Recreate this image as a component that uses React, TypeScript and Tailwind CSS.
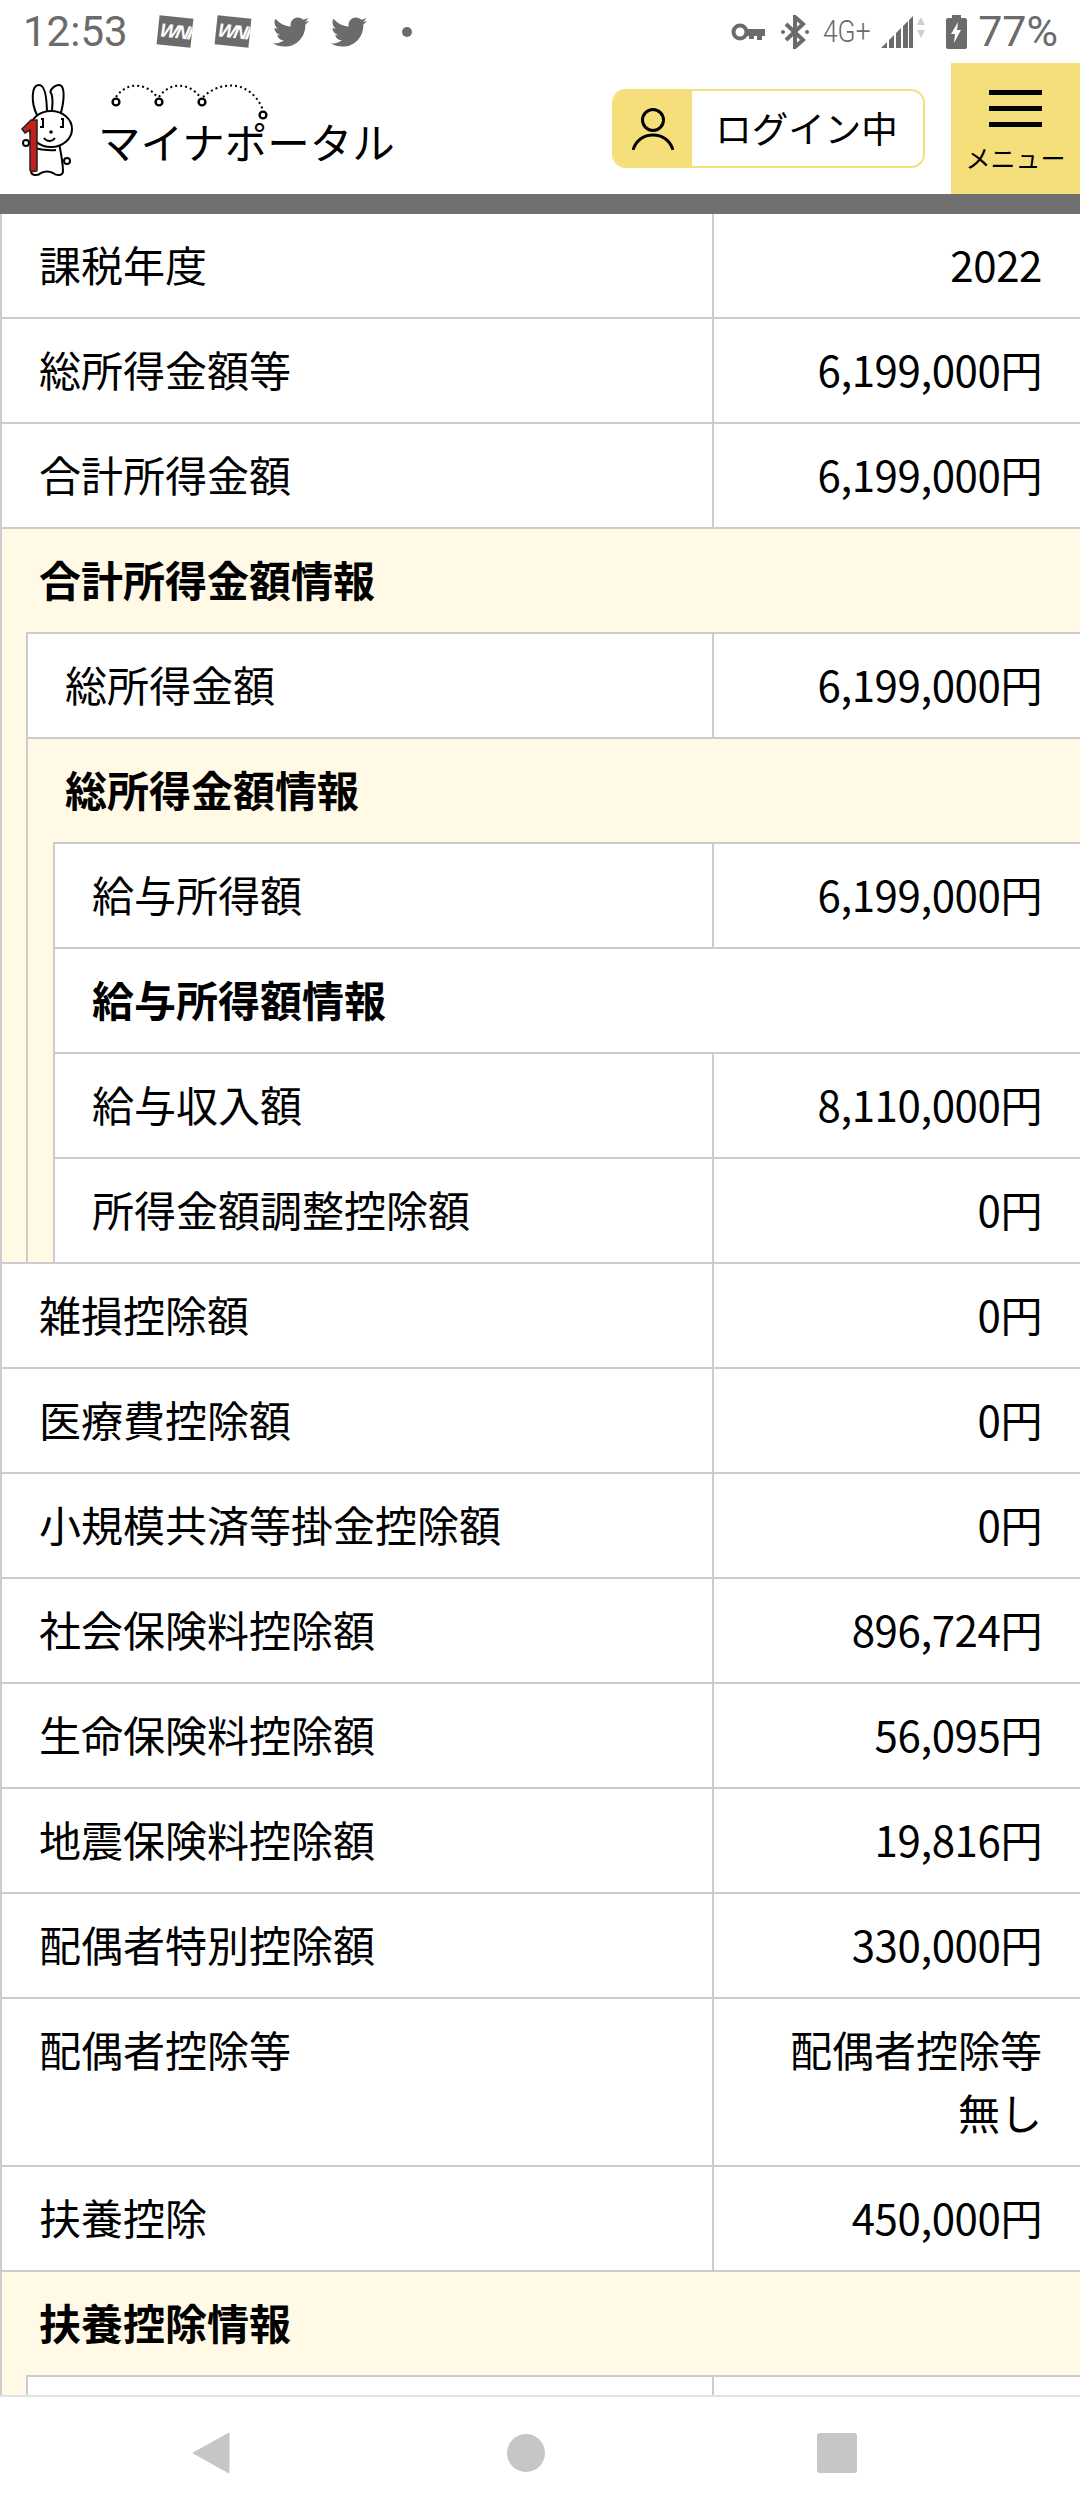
import { FaTwitter } from "react-icons/fa";

const font = "font-['Noto_Sans_CJK_JP','Noto_Sans',sans-serif]";

function WniIcon() {
    return (
        <div className="w-[34px] h-[29px] bg-[#6b6b6b] rotate-[6deg] flex items-center justify-center overflow-hidden">
            <span className="font-['Liberation_Sans',sans-serif] text-white font-bold italic text-[19px] leading-none tracking-[-2px] -skew-x-6">WNI</span>
        </div>
    );
}

function StatusBar() {
    return (
        <div className="h-[63px] flex items-center pl-[23px] pr-[22px] text-[#6b6b6b] font-['Roboto',sans-serif]">
            <span className="text-[42px] leading-none w-[135px]">12:53</span>
            <div className="flex items-center">
                <WniIcon />
                <div className="w-[24px]" />
                <WniIcon />
                <FaTwitter className="ml-[23px] w-[36px] h-[36px]" />
                <FaTwitter className="ml-[22px] w-[36px] h-[36px]" />
                <div className="ml-[35px] w-[10px] h-[10px] rounded-full bg-[#6b6b6b]" />
            </div>
            <div className="flex-1" />
            <svg width="34" height="20" viewBox="0 0 34 20" className="mr-[16px]">
                <circle cx="9" cy="10" r="6.5" fill="none" stroke="#6b6b6b" strokeWidth="4" />
                <path d="M15 7h19v7h-3v4h-5v-4h-3v3h-5v-3h-3z" fill="#6b6b6b" />
            </svg>
            <svg width="28" height="34" viewBox="0 0 28 34" className="mr-[14px]" fill="none" stroke="#6b6b6b" strokeWidth="4">
                <path d="M5 9l17 16-8 7V2l8 7-17 16" />
                <circle cx="2" cy="17" r="2" fill="#6b6b6b" stroke="none" />
                <circle cx="26" cy="17" r="2" fill="#6b6b6b" stroke="none" />
            </svg>
            <span className="text-[31px] leading-none font-['Roboto',sans-serif] font-light scale-x-[0.85] origin-left w-[52px] mr-[6px]">4G+</span>
            <svg width="44" height="34" viewBox="0 0 44 34" className="mr-[21px]">
                <path d="M0 33L6 27V33Z M8 25L13 20V33H8Z M15 18L20 13V33H15Z M22 11L27 6V33H22Z M28 5L32 1V33H28Z" fill="#6b6b6b" />
                <path d="M36 10l4-8 4 8zM36 15l4 8 4-8z" fill="#cfcfcf" />
            </svg>
            <svg width="21" height="34" viewBox="0 0 21 34" className="mr-[11px]">
                <path d="M6 0h9v3h4a2 2 0 0 1 2 2v27a2 2 0 0 1-2 2H2a2 2 0 0 1-2-2V5a2 2 0 0 1 2-2h4z" fill="#6b6b6b" />
                <path d="M12 7L5 19h4l-1 9 7-13h-4z" fill="#fff" />
            </svg>
            <span className="text-[43px] leading-none">77%</span>
        </div>
    );
}

function Rabbit() {
    return (
        <svg width="58" height="94" viewBox="0 0 58 94" className="shrink-0">
            <g fill="#fff" stroke="#000" strokeWidth="2">
                <path d="M19 32C13 20 13 2 21 2c7 0 8 16 8 30" />
                <path d="M33 32c2-8 2-18 0-22-2-2 3-8 8-8 7 0 5 18 1 31" />
                <path d="M17 60c-2 10-4 22-4 28 0 5 7 5 10 2 4-2 8-2 12 0 4 3 10 3 10-2 0-8-2-18-4-28z" />
                <circle cx="49" cy="78" r="3" />
                <ellipse cx="33" cy="46" rx="21" ry="18" />
                <circle cx="8" cy="60" r="3" />
                <path d="M12 64c8 2 18 4 26 3" fill="none" />
            </g>
            <path d="M4 46l9-9h6v50c0 2-7 2-7 0V47l-5 3z" fill="#c1201c" stroke="#222" strokeWidth="1.5" />
            <path d="M22 44h3v-8h-2M42 44h3v-8h-2" fill="none" stroke="#000" strokeWidth="2" />
            <circle cx="33" cy="49" r="1.8" fill="#000" />
            <path d="M26 55c3 4 8 4 11 0" fill="none" stroke="#000" strokeWidth="2" />
        </svg>
    );
}

function Header() {
    return (
        <div className="h-[131px] flex items-start">
            <div className="pl-[18px] pt-[20px] flex items-start">
                <Rabbit />
                <div className="relative ml-[22px] mt-[33px]">
                    <svg width="160" height="36" viewBox="0 0 160 36" className="absolute left-[13px] top-[-32px]" fill="none">
                        <g stroke="#000" strokeWidth="2" strokeDasharray="2 3">
                            <path d="M5 13C15 -2 35 -2 46 13" />
                            <path d="M48 13C58 -2 78 -2 89 13" />
                            <path d="M92 13C110 -4 140 -4 152 26" />
                        </g>
                        <g fill="#fff" stroke="#000" strokeWidth="2.4">
                            <circle cx="5" cy="18" r="3.4" />
                            <circle cx="48" cy="18" r="3.4" />
                            <circle cx="91" cy="18" r="3.4" />
                            <circle cx="152" cy="31" r="3.4" />
                        </g>
                    </svg>
                    <span className={`${font} text-[42.5px] leading-[50px] text-black whitespace-nowrap`}>マイナポータル</span>
                </div>
            </div>
            <div className="flex-1" />
            <div className="mt-[26px] mr-[26px] w-[313px] h-[79px] flex rounded-[14px] border-2 border-[#f5df7a] overflow-hidden">
                <div className="w-[78px] bg-[#f5df7a] flex items-center justify-center">
                    <svg width="42" height="42" viewBox="0 0 42 42" fill="none" stroke="#000" strokeWidth="3">
                        <circle cx="21" cy="12" r="10.5" />
                        <path d="M1 42c3-10 11-15 20-15s17 5 20 15" />
                    </svg>
                </div>
                <div className={`flex-1 flex items-center justify-center pr-[2px] ${font} text-[36.5px] text-black`}>ログイン中</div>
            </div>
            <div className="w-[129px] h-[131px] bg-[#f5df7a] flex flex-col items-center">
                <div className="mt-[27px] w-[53px] flex flex-col gap-[11px]">
                    <div className="h-[5px] bg-black" />
                    <div className="h-[5px] bg-black" />
                    <div className="h-[5px] bg-black" />
                </div>
                <span className={`${font} mt-[12px] text-[25px] leading-[36px] text-black whitespace-nowrap`}>メニュー</span>
            </div>
        </div>
    );
}

function Row({ label, value }: { label: string; value: string[] }) {
    const numeric = /^[0-9]/.test(value[0]);
    return (
        <div className="flex border-t-2 border-[#cccccc] bg-white">
            <div className="flex-1 pl-[37px] pt-[18px] pb-[22px] leading-[63px] border-r-2 border-[#cccccc]">{label}</div>
            <div className={`w-[366px] pr-[38px] pt-[18px] pb-[22px] leading-[63px] text-right ${numeric ? "tracking-[-0.4px]" : ""}`}>
                {value.map((line) => (
                    <div key={line}>{line}</div>
                ))}
            </div>
        </div>
    );
}

function Heading({ label, plain }: { label: string; plain?: boolean }) {
    return (
        <div className={`border-t-2 border-[#cccccc] pl-[37px] pt-[18px] pb-[22px] leading-[63px] font-bold ${plain ? "bg-white" : "bg-[#fff9e5]"}`}>
            {label}
        </div>
    );
}

function Nested({ children, inner }: { children: React.ReactNode; inner?: boolean }) {
    return (
        <div className={`bg-[#fff9e5] ${inner ? "pl-[25px]" : "pl-[24px]"}`}>
            <div className="border-l-2 border-[#cccccc]">{children}</div>
        </div>
    );
}

const afterNested: [string, string][] = [
    ["雑損控除額", "0円"],
    ["医療費控除額", "0円"],
    ["小規模共済等掛金控除額", "0円"],
    ["社会保険料控除額", "896,724円"],
    ["生命保険料控除額", "56,095円"],
    ["地震保険料控除額", "19,816円"],
    ["配偶者特別控除額", "330,000円"],
];

export default function App() {
    return (
        <div className={`w-[1080px] h-[2520px] bg-white flex flex-col overflow-hidden text-black ${font}`}>
            <StatusBar />
            <Header />
            <div className="h-[20px] bg-[#707070] shrink-0 relative z-10" />
            <div className="flex-1 min-h-0 overflow-hidden border-l-2 border-[#cccccc] text-[42px] -mt-[2px]">
                <Row label="課税年度" value={["2022"]} />
                <Row label="総所得金額等" value={["6,199,000円"]} />
                <Row label="合計所得金額" value={["6,199,000円"]} />
                <Heading label="合計所得金額情報" />
                <Nested>
                    <Row label="総所得金額" value={["6,199,000円"]} />
                    <Heading label="総所得金額情報" />
                    <Nested inner>
                        <Row label="給与所得額" value={["6,199,000円"]} />
                        <Heading label="給与所得額情報" plain />
                        <Row label="給与収入額" value={["8,110,000円"]} />
                        <Row label="所得金額調整控除額" value={["0円"]} />
                    </Nested>
                </Nested>
                {afterNested.map(([label, value]) => (
                    <Row key={label} label={label} value={[value]} />
                ))}
                <Row label="配偶者控除等" value={["配偶者控除等", "無し"]} />
                <Row label="扶養控除" value={["450,000円"]} />
                <Heading label="扶養控除情報" />
                <Nested>
                    <Row label="" value={[""]} />
                </Nested>
            </div>
            <div className="h-[125px] shrink-0 border-t-2 border-[#e2e2e2] flex items-center justify-between pb-[12px]">
                <svg width="38" height="42" viewBox="0 0 38 42" className="ml-[192px]">
                    <path d="M37 1v40L1 21z" fill="#c6c6c6" stroke="#c6c6c6" strokeLinejoin="round" />
                </svg>
                <div className="w-[38px] h-[38px] rounded-full bg-[#c6c6c6] ml-[277px]" />
                <div className="w-[40px] h-[40px] rounded-[3px] bg-[#c6c6c6] ml-[272px]" />
                <div className="w-[223px]" />
            </div>
        </div>
    );
}
